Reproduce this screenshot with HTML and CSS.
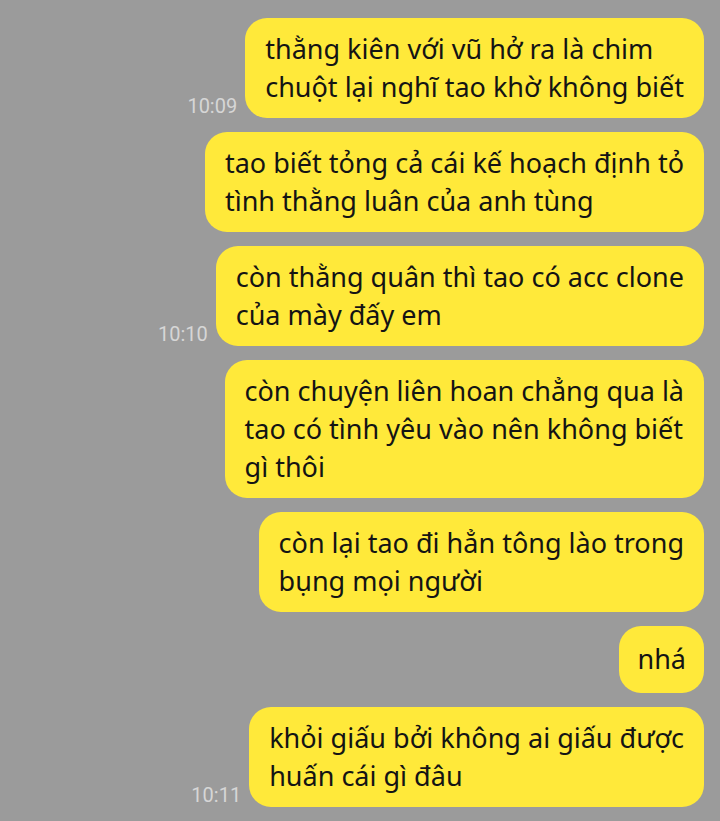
FILE: index.html
```html
<!DOCTYPE html>
<html>
<head>
    <title>Chat</title>
    <meta charset="UTF-8">
    <meta name="viewport" content="width=device-width, initial-scale=1.0">
    <link rel="stylesheet" href="styles.css">
</head>
<body>
    <div class="chat">
        <div class="row">
            <span class="time">10:09</span>
            <div class="bubble">thằng kiên với vũ hở ra là chim<br>chuột lại nghĩ tao khờ không biết</div>
        </div>
        <div class="row">
            <div class="bubble">tao biết tỏng cả cái kế hoạch định tỏ<br>tình thằng luân của anh tùng</div>
        </div>
        <div class="row">
            <span class="time">10:10</span>
            <div class="bubble">còn thằng quân thì tao có acc clone<br>của mày đấy em</div>
        </div>
        <div class="row">
            <div class="bubble">còn chuyện liên hoan chẳng qua là<br>tao có tình yêu vào nên không biết<br>gì thôi</div>
        </div>
        <div class="row">
            <div class="bubble">còn lại tao đi hẳn tông lào trong<br>bụng mọi người</div>
        </div>
        <div class="row">
            <div class="bubble short">nhá</div>
        </div>
        <div class="row">
            <span class="time">10:11</span>
            <div class="bubble">khỏi giấu bởi không ai giấu được<br>huấn cái gì đâu</div>
        </div>
        <div class="row">
            <div class="bubble">thôi nói chung là tao biết hết rồi<br>nhé</div>
        </div>
    </div>
</body>
</html>
```

FILE: styles.css
```css
:root {
    --chat-bg: #9b9b9b;
    --bubble-bg: #ffe93a;
    --text-primary: #141414;
    --time-color: #d6d6d6;
}

* {
    margin: 0;
    padding: 0;
    box-sizing: border-box;
}

body {
    font-family: 'Noto Sans', 'Roboto', sans-serif;
    background-color: var(--chat-bg);
    color: var(--text-primary);
    height: 821px;
    overflow: hidden;
}

.chat {
    display: flex;
    flex-direction: column;
    gap: 14px;
    padding: 18px 16px 0 0;
}

.row {
    display: flex;
    justify-content: flex-end;
    align-items: flex-end;
    gap: 8px;
}

.time {
    font-family: 'Roboto', sans-serif;
    font-size: 20px;
    line-height: 20px;
    color: var(--time-color);
    margin-bottom: 2px;
}

.bubble {
    background: var(--bubble-bg);
    border-radius: 22px;
    padding: 12px 20px;
    font-size: 27px;
    line-height: 38px;
    white-space: nowrap;
}

.bubble.short {
    padding: 14px 18px 15px;
}
```
